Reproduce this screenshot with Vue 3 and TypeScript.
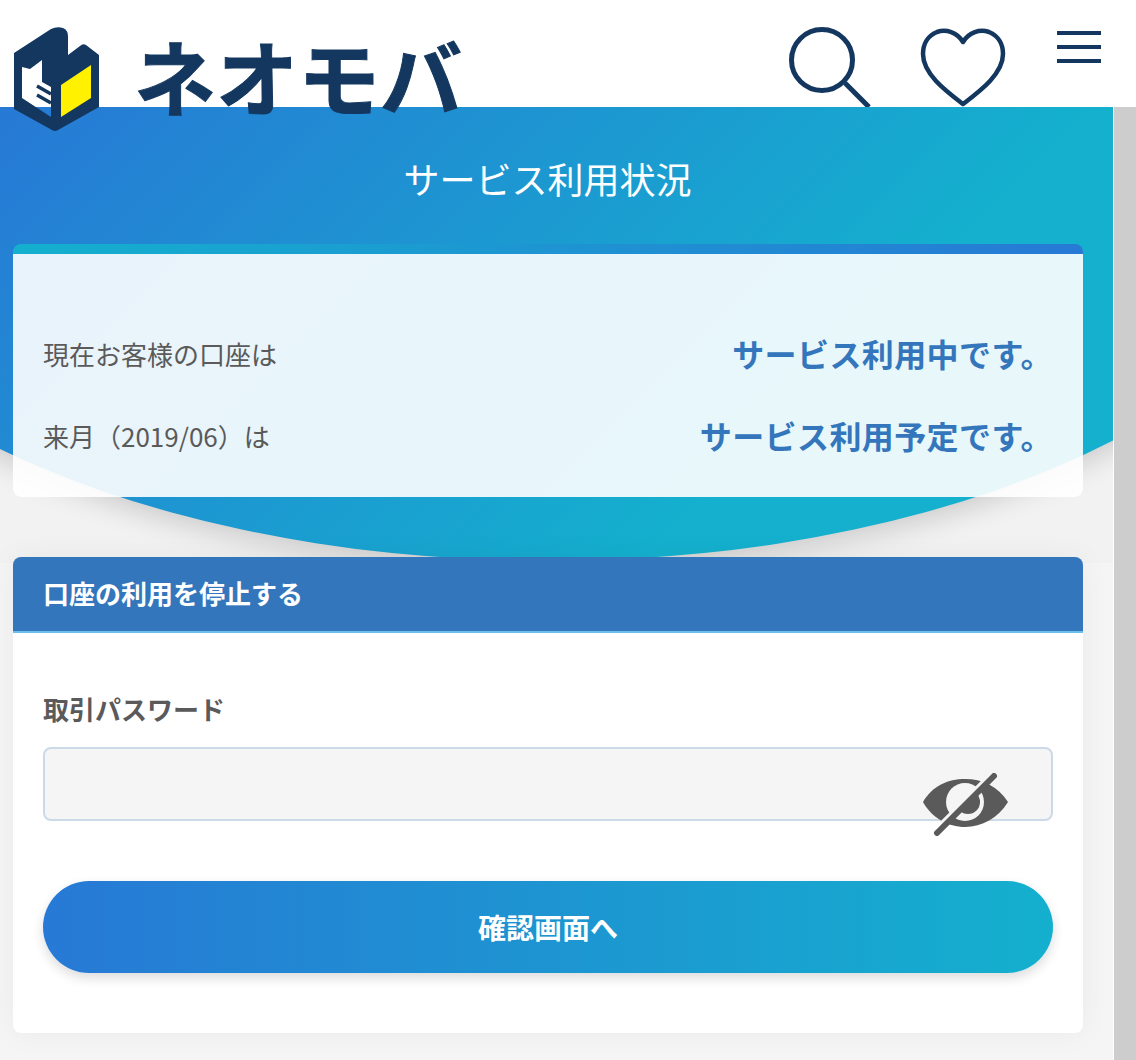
<script setup lang="ts">
const rows = [
  { label: "現在お客様の口座は", value: "サービス利用中です。" },
  { label: "来月（2019/06）は", value: "サービス利用予定です。" },
]
</script>

<template>
  <div class="page">
    <header class="top">
      <div class="brand">
        <svg class="brand-mark" viewBox="0 0 88 105" width="88" height="105">
          <path
            fill-rule="evenodd"
            fill="#14375f"
            d="M1 26 L38 2 Q44 -1 50 1 Q55 3 55 9 L55 28 L67 19 Q70 16 73 18 L86 28 L86 80 L45 103 Q42 105 39 103 L1 82 Z
               M9 40 L17 42 L29 33 L29 55 L38 60 L38 90 L9 71 Z"
          />
          <path d="M24 59 L38 67 M24 68 L38 76" stroke="#14375f" stroke-width="3.5" fill="none" />
          <path d="M48 58 L78 38 L78 71 L48 90 Z" fill="#fff100" />
        </svg>
        <span class="brand-name">ネオモバ</span>
      </div>
      <div class="top-icons">
        <svg class="icon-search" viewBox="0 0 82 80" width="82" height="80">
          <circle cx="33" cy="33" r="30.5" fill="none" stroke="#14375f" stroke-width="5" />
          <path d="M56 56 L80 80" stroke="#14375f" stroke-width="5" />
        </svg>
        <svg class="icon-heart" viewBox="0 0 88 80" width="88" height="80">
          <path d="M44 14 C38 4 27 1 18 4 C8 8 4 17 4 26 C4 46 27 63 44 76 C61 63 84 46 84 26 C84 17 80 8 70 4 C61 1 50 4 44 14 Z" fill="none" stroke="#14375f" stroke-width="4.5" stroke-linejoin="round" />
        </svg>
        <div class="burger"><i></i><i></i><i></i></div>
      </div>
    </header>

    <div class="below">
      <main class="main">
        <section class="hero">
          <h1>サービス利用状況</h1>
          <div class="status-card">
            <div v-for="row in rows" :key="row.label" class="status-row">
              <span class="status-label">{{ row.label }}</span>
              <strong class="status-value">{{ row.value }}</strong>
            </div>
          </div>
        </section>

        <section class="stop-card">
          <h2>口座の利用を停止する</h2>
          <div class="stop-body">
            <label class="field-label">取引パスワード</label>
            <div class="field">
              <input class="field-input" type="password" />
              <svg class="eye" viewBox="0 0 88 64" width="88" height="64">
                <path d="M1 30 C10 14 26 7 43 7 C60 7 76 14 86 30 C76 46 60 55 43 55 C26 55 10 46 1 30 Z" fill="#5a5a5a" />
                <circle cx="43" cy="30" r="19" fill="#f5f5f5" />
                <path d="M54.5 21.5 A12 12 0 0 1 37.5 38.5 Z" fill="#5a5a5a" />
                <path d="M66 6 L20 52" stroke="#f5f5f5" stroke-width="6" />
                <path d="M72 4 L15 61" stroke="#5a5a5a" stroke-width="6" stroke-linecap="round" />
              </svg>
            </div>
            <button class="submit" type="button">確認画面へ</button>
          </div>
        </section>
      </main>
      <div class="scrollbar"></div>
    </div>
  </div>
</template>

<style>
html, body {
  margin: 0;
  overflow: hidden;
}
</style>

<style scoped>
.page {
  width: 1136px;
  height: 1060px;
  overflow: hidden;
  background: #fff;
  font-family: "Noto Sans CJK JP", "Open Sans", sans-serif;
  color: #5a5a5a;
}
.top {
  position: relative;
  z-index: 2;
  height: 107px;
  box-sizing: border-box;
  padding: 27px 35px 0 13px;
  display: flex;
  justify-content: space-between;
  background: #fff;
}
.brand {
  display: flex;
  align-items: flex-start;
  height: 80px;
  filter: blur(0.5px);
}
.brand-name {
  margin-left: 33px;
  font-size: 82px;
  line-height: 96px;
  font-weight: 700;
  -webkit-text-stroke: 1px #14375f;
  color: #14375f;
  white-space: nowrap;
}
.top-icons {
  display: flex;
  align-items: flex-start;
}
.icon-search {
  display: block;
  margin-right: 48px;
  filter: blur(0.4px);
}
.icon-heart {
  display: block;
  margin-top: 1px;
  margin-right: 50px;
  filter: blur(0.4px);
}
.burger {
  margin-top: 4px;
  width: 44px;
  display: flex;
  flex-direction: column;
  gap: 10px;
}
.burger i {
  display: block;
  height: 4px;
  background: #14375f;
}
.below {
  display: flex;
  height: 953px;
}
.main {
  width: 1113px;
  background: #f5f5f5;
}
.scrollbar {
  width: 22px;
  margin-left: 1px;
  background: #cdcdcd;
}
.hero {
  position: relative;
  height: 456px;
  margin-bottom: -6px;
  overflow: hidden;
  background: #f2f2f2;
}
.hero::before {
  content: "";
  position: absolute;
  top: 0;
  left: -252px;
  width: 1600px;
  height: 454px;
  border-radius: 0 0 800px 800px / 0 0 413px 413px;
  background: #14b0ce linear-gradient(135deg, #2779d5 0%, #14b0ce 70%) 252px 0 / 1113px 454px no-repeat;
  box-shadow: 0 6px 30px rgba(0, 0, 0, 0.18);
}
.hero h1 {
  position: relative;
  margin: 0;
  padding-top: 45px;
  height: 137px;
  width: 1095px;
  box-sizing: border-box;
  text-align: center;
  font-size: 36px;
  line-height: 52px;
  font-weight: 400;
  color: #fff;
}
.status-card {
  position: relative;
  margin: 0 30px 0 13px;
  height: 253px;
  box-sizing: border-box;
  padding: 58px 30px 0;
  border-top: 10px solid transparent;
  border-radius: 8px;
  background:
    linear-gradient(90deg, #14b0ce, #2779d5) top / 100% 10px no-repeat border-box,
    rgba(255, 255, 255, 0.9) padding-box;
}
.status-row {
  display: flex;
  justify-content: space-between;
  align-items: center;
  height: 82px;
}
.status-label {
  font-size: 26px;
}
.status-value {
  font-size: 32px;
  font-weight: 700;
  letter-spacing: 0.4px;
  color: #3476bc;
}
.stop-card {
  position: relative;
  width: 1070px;
  margin-left: 13px;
  height: 476px;
  border-radius: 8px;
  overflow: hidden;
  background: #fff;
  box-shadow: 0 0 30px rgba(0, 0, 0, 0.05);
}
.stop-card h2 {
  margin: 0;
  height: 76px;
  box-sizing: border-box;
  padding-left: 30px;
  font-size: 26px;
  font-weight: 700;
  line-height: 72px;
  color: #fff;
  background: #3476bc;
  border-bottom: 2px solid #6ac0ea;
}
.stop-body {
  padding: 57px 30px 0;
}
.field-label {
  display: block;
  font-size: 26px;
  font-weight: 700;
  line-height: 38px;
}
.field {
  position: relative;
  margin-top: 19px;
}
.field-input {
  display: block;
  width: 100%;
  height: 74px;
  box-sizing: border-box;
  background: #f5f5f5;
  border: 2px solid #ccd9e6;
  border-radius: 8px;
  outline: none;
}
.eye {
  position: absolute;
  left: 879px;
  top: 25px;
  filter: blur(0.5px);
}
.submit {
  display: block;
  width: 100%;
  height: 92px;
  margin-top: 60px;
  border: 0;
  border-radius: 46px;
  background: linear-gradient(90deg, #2779d5, #14b0ce);
  box-shadow: 0 5px 12px rgba(0, 0, 0, 0.14);
  font-family: inherit;
  font-size: 28px;
  font-weight: 700;
  color: #fff;
}
</style>
